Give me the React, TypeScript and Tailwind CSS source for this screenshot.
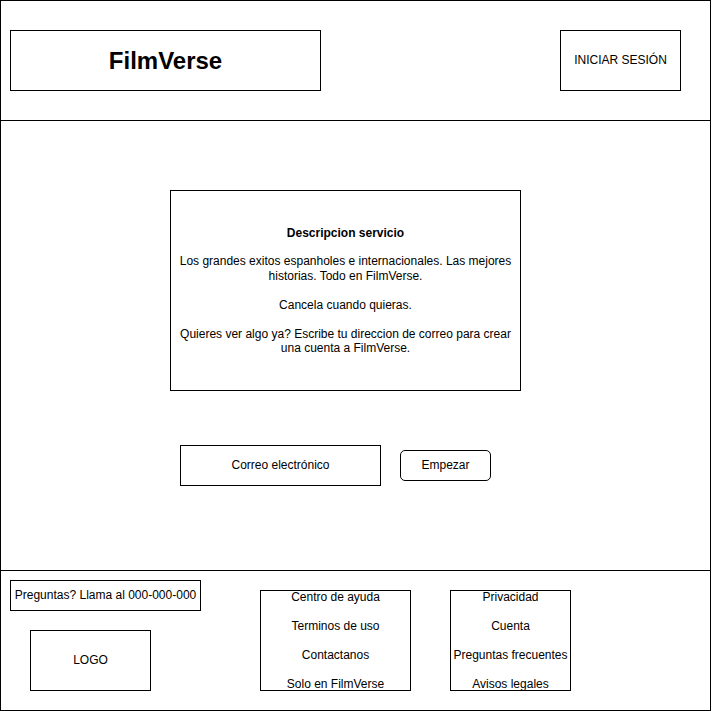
export default function App() {
  return (
    <div className="w-[711px] bg-white text-black font-['Liberation_Sans',Arial,sans-serif] text-[12px] leading-[14.4px]">
      {/* Header */}
      <header className="h-[121px] border border-black flex justify-between items-start pt-[29px] pl-[9px] pr-[29px]">
        <div className="w-[311px] h-[61px] border border-black flex items-center justify-center">
          <span className="text-[24px] leading-[28px] font-bold">FilmVerse</span>
        </div>
        <div className="w-[121px] h-[61px] border border-black flex items-center justify-center">
          <span>INICIAR SESIÓN</span>
        </div>
      </header>

      {/* Main */}
      <main className="h-[450px] border-x border-b border-black pt-[69px] pl-[169px]">
        <div className="w-[351px] h-[201px] border border-black flex items-center justify-center text-center">
          <p>
            <span className="font-bold">Descripcion servicio</span>
            <br />
            <br />
            Los grandes exitos espanholes e internacionales. Las mejores
            <br />
            historias. Todo en FilmVerse.
            <br />
            <br />
            Cancela cuando quieras.
            <br />
            <br />
            Quieres ver algo ya? Escribe tu direccion de correo para crear
            <br />
            una cuenta a FilmVerse.
          </p>
        </div>
        <div className="flex items-center gap-[19px] mt-[54px] ml-[10px]">
          <div className="w-[201px] h-[41px] border border-black flex items-center justify-center">
            Correo electrónico
          </div>
          <button className="w-[91px] h-[31px] border border-black rounded-[5px] flex items-center justify-center bg-white">
            Empezar
          </button>
        </div>
      </main>

      {/* Footer */}
      <footer className="h-[140px] border-x border-b border-black flex items-start pl-[9px]">
        <div className="flex flex-col items-start pt-[9px]">
          <div className="w-[191px] h-[31px] border border-black flex items-center justify-center">
            Preguntas? Llama al 000-000-000
          </div>
          <div className="w-[121px] h-[61px] border border-black flex items-center justify-center mt-[19px] ml-[20px]">
            LOGO
          </div>
        </div>
        <div className="w-[151px] h-[101px] border border-black flex items-center justify-center text-center mt-[19px] ml-[59px] overflow-hidden">
          <p className="whitespace-nowrap">
            Centro de ayuda
            <br />
            <br />
            Terminos de uso
            <br />
            <br />
            Contactanos
            <br />
            <br />
            Solo en FilmVerse
          </p>
        </div>
        <div className="w-[121px] h-[101px] border border-black flex items-center justify-center text-center mt-[19px] ml-[39px] overflow-visible">
          <p className="whitespace-nowrap">
            Privacidad
            <br />
            <br />
            Cuenta
            <br />
            <br />
            Preguntas frecuentes
            <br />
            <br />
            Avisos legales
          </p>
        </div>
      </footer>
    </div>
  );
}
